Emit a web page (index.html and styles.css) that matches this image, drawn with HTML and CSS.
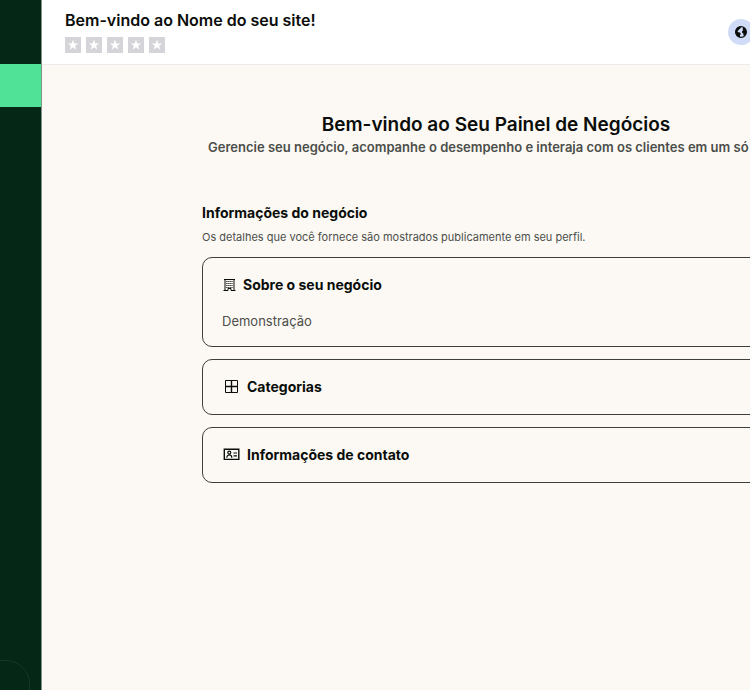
FILE: index.html
```html
<!DOCTYPE html>
<html lang="pt">
<head>
  <meta charset="UTF-8">
  <meta name="viewport" content="width=device-width, initial-scale=1.0">
  <title>Painel de Negócios</title>
  <link rel="stylesheet" href="styles.css">
</head>
<body>
  <div class="app">
    <nav class="sidebar" aria-label="Menu">
      <a href="#" class="sidebar-item active" aria-label="Painel"></a>
      <button class="sidebar-toggle" aria-label="Abrir menu"></button>
    </nav>
    <div class="page">
      <header class="topbar">
        <div>
          <h2 class="site-name">Bem-vindo ao Nome do seu site!</h2>
          <div class="stars">
            <svg class="star" viewBox="0 0 16 16"><path d="M8 2.6l1.3 3.8h4l-3.2 2.4 1.2 3.9L8 10.3l-3.3 2.4 1.2-3.9-3.2-2.4h4z"/></svg>
            <svg class="star" viewBox="0 0 16 16"><path d="M8 2.6l1.3 3.8h4l-3.2 2.4 1.2 3.9L8 10.3l-3.3 2.4 1.2-3.9-3.2-2.4h4z"/></svg>
            <svg class="star" viewBox="0 0 16 16"><path d="M8 2.6l1.3 3.8h4l-3.2 2.4 1.2 3.9L8 10.3l-3.3 2.4 1.2-3.9-3.2-2.4h4z"/></svg>
            <svg class="star" viewBox="0 0 16 16"><path d="M8 2.6l1.3 3.8h4l-3.2 2.4 1.2 3.9L8 10.3l-3.3 2.4 1.2-3.9-3.2-2.4h4z"/></svg>
            <svg class="star" viewBox="0 0 16 16"><path d="M8 2.6l1.3 3.8h4l-3.2 2.4 1.2 3.9L8 10.3l-3.3 2.4 1.2-3.9-3.2-2.4h4z"/></svg>
          </div>
        </div>
        <button class="globe-button" aria-label="Idioma">
          <svg width="12" height="12" viewBox="0 0 12 12">
            <circle cx="6" cy="6" r="5.4" fill="#d0dcf7" stroke="#0a0d0a" stroke-width="1.2"/>
            <path fill="#0a0d0a" d="M5 .6L6 1.8 4.9 3 3.8 3.4 3.2 4.8 2.4 5.2 3.4 6.2l1.6.4.8 1.4-.8 1.2v2L2.2 10 .6 7.4V4.6L2.4 1.6zM8.4 1l2 1.8 1 2.8-.4 2.6L9.4 10 8.4 9.2V7.6L7.2 7 7 5.2l1.2-1L7.6 3z"/>
          </svg>
        </button>
      </header>

      <main class="content">
        <h1 class="title">Bem-vindo ao Seu Painel de Negócios</h1>
        <p class="subtitle">Gerencie seu negócio, acompanhe o desempenho e interaja com os clientes em um só lugar</p>

        <section class="business">
          <h2 class="section-title">Informações do negócio</h2>
          <p class="section-text">Os detalhes que você fornece são mostrados publicamente em seu perfil.</p>

          <div class="card card-about">
            <h3 class="card-title">
              <svg width="14" height="14" viewBox="0 0 14 14" fill="none" stroke="#0a0d0a">
                <path d="M3 13V1.5h9V13M2 1.5h11M1.5 12.5H6V10.500h3v2h4.500"/>
                <path stroke-width="1.2" stroke-dasharray="1.2 .8" d="M4.300 3.500h6.500M4.300 5.500h6.500M4.300 7.500h6.500M4.300 9.500h6.500"/>
              </svg>
              Sobre o seu negócio
            </h3>
            <p class="card-text">Demonstração</p>
          </div>

          <div class="card">
            <h3 class="card-title">
              <svg width="18" height="14" viewBox="0 0 18 14" fill="none" stroke="#0a0d0a">
                <path d="M3.5.5h12v12h-12z"/>
                <path stroke-width="1.4" d="M9.5.5v12M3.5 6.5h12"/>
              </svg>
              Categorias
            </h3>
          </div>

          <div class="card">
            <h3 class="card-title">
              <svg width="18" height="14" viewBox="0 0 18 14" fill="none" stroke="#0a0d0a">
                <path stroke-width="1.4" d="M2.3 1.2h14.5v10.200H2.300z"/>
                <circle cx="7.3" cy="4.6" r="1.5" stroke-width="1.2"/>
                <path stroke-width="1.2" d="M4.8 9.8c0-4 5-4 5 0M11.500 5h3.500M11.500 7.800h3.500"/>
              </svg>
              Informações de contato
            </h3>
          </div>
        </section>
      </main>
    </div>
  </div>
</body>
</html>
```
FILE: styles.css
```css
* {
  box-sizing: border-box;
}
body {
  margin: 0;
  overflow: hidden;
  font-family: Inter, "Liberation Sans", sans-serif;
  background-color: #fcf9f5;
  color: #0a0d0a;
}
h1, h2, h3, p {
  margin: 0;
}
.app {
  display: flex;
  min-width: 950px;
  min-height: 100vh;
}
.sidebar {
  display: flex;
  flex-direction: column;
  justify-content: space-between;
  width: 42px;
  padding-top: 64px;
  background-color: #052716;
  border-right: 1px solid #7f9386;
  overflow: hidden;
}
.sidebar-item {
  height: 43px;
}
.sidebar-item.active {
  background-color: #50e398;
}
.sidebar-toggle {
  width: 60px;
  height: 60px;
  margin: 0 0 -30px -30px;
  background-color: #052716;
  border: 1px solid #15382a;
  border-radius: 24px;
}
.page {
  flex: 1;
}
.topbar {
  display: flex;
  justify-content: space-between;
  height: 65px;
  padding: 8px 196px 0 23px;
  background-color: #fff;
  border-bottom: 1px solid #ebebeb;
}
.site-name {
  font-size: 16px;
  font-weight: 600;
  line-height: 25px;
}
.stars {
  display: flex;
  gap: 5px;
  margin-top: 4px;
}
.star {
  width: 16px;
  height: 16px;
  background-color: #d5d4d9;
  fill: #fff;
}
.globe-button {
  display: flex;
  align-items: center;
  justify-content: center;
  width: 26px;
  height: 26px;
  margin-top: 11px;
  padding: 0;
  background-color: #d0dcf7;
  border: none;
  border-radius: 50%;
}
.content {
  padding: 47px 160px 0;
}
.title {
  font-size: 19px;
  font-weight: 600;
  line-height: 26px;
  text-align: center;
}
.subtitle {
  color: #4b4e49;
  font-size: 13px;
  font-weight: 600;
  line-height: 18px;
  text-align: center;
  white-space: nowrap;
}
.business {
  margin-top: 45px;
}
.section-title {
  font-size: 14px;
  font-weight: 700;
  line-height: 24px;
}
.section-text {
  margin-top: 2px;
  color: #4b4e49;
  font-size: 11px;
  line-height: 20px;
}
.card {
  margin-top: 12px;
  padding: 14px 19px;
  border: 1px solid #3c3f3a;
  border-radius: 10px;
}
.card-about {
  margin-top: 10px;
}
.card-title {
  display: flex;
  align-items: center;
  gap: 7px;
  font-size: 14px;
  font-weight: 700;
  line-height: 26px;
}
.card-text {
  margin-top: 12px;
  color: #4b4e49;
  font-size: 13px;
  line-height: 22px;
}
```
